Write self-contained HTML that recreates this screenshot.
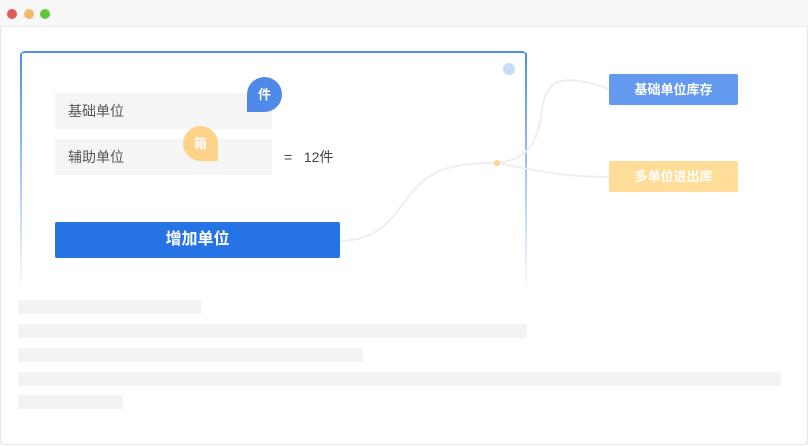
<!DOCTYPE html>
<html><head><meta charset="utf-8"><style>
*{margin:0;padding:0;box-sizing:border-box}
body{width:808px;height:446px;background:#fff;position:relative;overflow:hidden;font-family:"Liberation Sans","Noto Sans CJK SC",sans-serif}
.win{position:absolute;left:0;top:0;width:808px;height:445px;border:1px solid #e6e6e6;border-radius:4px}
.bar{position:absolute;left:0;top:0;width:808px;height:27px;background:#f7f7f7;border-bottom:1px solid #ededed}
.dot{position:absolute;top:9px;width:10px;height:10px;border-radius:50%}
.card{position:absolute;left:20px;top:51px;width:507px;height:6px;border-top:2px solid #4a8ef0;border-radius:5px 5px 0 0}
.side{position:absolute;top:53px;width:2px;height:242px;background:linear-gradient(#4a8ef0,rgba(74,142,240,0.35) 65%,rgba(255,255,255,0))}
.inp{position:absolute;left:55px;width:217px;height:36px;background:#f5f5f5;color:#555;font-size:14px;line-height:36px;padding-left:13px}
.bad{position:absolute;width:35px;height:35px;color:#fff;font-size:13px;font-weight:bold;text-align:center;line-height:35px}
.btn{position:absolute;left:55px;top:222px;width:285px;height:36px;background:#2673e5;border-radius:2px;color:#fff;font-size:16px;font-weight:bold;text-align:center;line-height:36px}
.lab{position:absolute;left:609px;width:129px;height:31px;color:#fff;font-size:13px;font-weight:bold;text-align:center;line-height:31px;border-radius:2px}
.g{position:absolute;left:18px;height:14px;background:#f3f3f3}
</style></head><body>
<div class="win"></div>
<div class="bar"></div>
<div class="dot" style="left:7px;background:#e25a5a"></div>
<div class="dot" style="left:24px;background:#f1bb6a"></div>
<div class="dot" style="left:40px;background:#5cc840"></div>
<div class="card"></div>
<div class="side" style="left:20px;border-top-left-radius:4px"></div>
<div class="side" style="left:525px"></div>
<div style="position:absolute;left:503px;top:63px;width:12px;height:12px;border-radius:50%;background:#c8dcf8"></div>
<svg width="808" height="446" style="position:absolute;left:0;top:0">
<path d="M340 241 C380 240 390 220 410 195 C430 170 450 163 497 163 C530 160 538 140 542 110 C546 80 560 72 609 89" fill="none" stroke="#eeeeee" stroke-width="2"/>
<path d="M497 163 C540 172 570 177 609 177" fill="none" stroke="#eeeeee" stroke-width="2"/>
<circle cx="497" cy="163" r="3" fill="#fdd38a"/>
</svg>
<div class="inp" style="top:93px">基础单位</div>
<div class="inp" style="top:139px">辅助单位</div>
<div class="bad" style="left:247px;top:77px;background:#4f8ae8;border-radius:18px 18px 18px 0">件</div>
<div class="bad" style="left:183px;top:126px;background:#fdd38a;border-radius:18px 18px 0 18px">箱</div>
<div style="position:absolute;left:284px;top:148px;font-size:14px;color:#444;line-height:18px">=&nbsp;&nbsp;&nbsp;12件</div>
<div class="btn">增加单位</div>
<div class="lab" style="top:74px;background:#6399ee">基础单位库存</div>
<div class="lab" style="top:161px;background:#ffdd99">多单位进出库</div>
<div class="g" style="top:300px;width:183px"></div>
<div class="g" style="top:324px;width:509px"></div>
<div class="g" style="top:348px;width:345px"></div>
<div class="g" style="top:372px;width:763px"></div>
<div class="g" style="top:395px;width:105px"></div>
</body></html>
